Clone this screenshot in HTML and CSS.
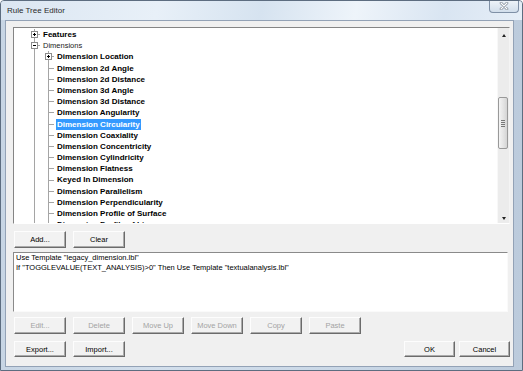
FILE: index.html
```html
<!DOCTYPE html>
<html lang="en">

<head>
    <meta charset="UTF-8">
    <title>Rule Tree Editor</title>
    <link rel="stylesheet" href="styles.css">
</head>

<body>
    <div class="window">
        <div class="titlebar">
            <span class="title">Rule Tree Editor</span>
            <span class="close">
                <svg width="10" height="8" viewBox="0 0 10 8">
                    <path d="M2 1 L8 7 M8 1 L2 7" stroke="#7f8a96" stroke-width="2.6" stroke-linecap="round" />
                    <path d="M2 1 L8 7 M8 1 L2 7" stroke="#ffffff" stroke-width="1.2" stroke-linecap="round" />
                </svg>
            </span>
        </div>

        <div class="client">
            <div class="tree">
                <div class="tree-body">
                    <div class="row"><span class="cell exp"><span class="box plus"></span></span><span class="label">Features</span></div>
                    <div class="row"><span class="cell exp"><span class="box minus"></span></span><span class="label plain">Dimensions</span></div>
                    <div class="row"><span class="cell pipe"></span><span class="cell exp"><span class="box plus"></span></span><span class="label">Dimension Location</span></div>
                    <div class="row"><span class="cell pipe"></span><span class="cell tee"></span><span class="label">Dimension 2d Angle</span></div>
                    <div class="row"><span class="cell pipe"></span><span class="cell tee"></span><span class="label">Dimension 2d Distance</span></div>
                    <div class="row"><span class="cell pipe"></span><span class="cell tee"></span><span class="label">Dimension 3d Angle</span></div>
                    <div class="row"><span class="cell pipe"></span><span class="cell tee"></span><span class="label">Dimension 3d Distance</span></div>
                    <div class="row"><span class="cell pipe"></span><span class="cell tee"></span><span class="label">Dimension Angularity</span></div>
                    <div class="row"><span class="cell pipe"></span><span class="cell tee"></span><span class="label selected">Dimension Circularity</span></div>
                    <div class="row"><span class="cell pipe"></span><span class="cell tee"></span><span class="label">Dimension Coaxiality</span></div>
                    <div class="row"><span class="cell pipe"></span><span class="cell tee"></span><span class="label">Dimension Concentricity</span></div>
                    <div class="row"><span class="cell pipe"></span><span class="cell tee"></span><span class="label">Dimension Cylindricity</span></div>
                    <div class="row"><span class="cell pipe"></span><span class="cell tee"></span><span class="label">Dimension Flatness</span></div>
                    <div class="row"><span class="cell pipe"></span><span class="cell tee"></span><span class="label">Keyed In Dimension</span></div>
                    <div class="row"><span class="cell pipe"></span><span class="cell tee"></span><span class="label">Dimension Parallelism</span></div>
                    <div class="row"><span class="cell pipe"></span><span class="cell tee"></span><span class="label">Dimension Perpendicularity</span></div>
                    <div class="row"><span class="cell pipe"></span><span class="cell tee"></span><span class="label">Dimension Profile of Surface</span></div>
                    <div class="row"><span class="cell pipe"></span><span class="cell tee"></span><span class="label">Dimension Profile of Line</span></div>
                </div>
                <div class="scrollbar">
                    <div class="sb-btn up"><span class="arrow-up"></span></div>
                    <div class="track">
                        <div class="thumb"><span class="grip"></span></div>
                    </div>
                    <div class="sb-btn down"><span class="arrow-down"></span></div>
                </div>
            </div>

            <div class="btn-row first">
                <button class="btn">Add...</button>
                <button class="btn">Clear</button>
            </div>

            <div class="rule-text">
                <div>Use Template "legacy_dimension.lbl"</div>
                <div>If "TOGGLEVALUE(TEXT_ANALYSIS)&gt;0" Then Use Template "textualanalysis.lbl"</div>
            </div>

            <div class="btn-row second">
                <button class="btn" disabled>Edit...</button>
                <button class="btn" disabled>Delete</button>
                <button class="btn" disabled>Move Up</button>
                <button class="btn" disabled>Move Down</button>
                <button class="btn" disabled>Copy</button>
                <button class="btn" disabled>Paste</button>
            </div>

            <div class="btn-row last">
                <div class="group">
                    <button class="btn">Export...</button>
                    <button class="btn">Import...</button>
                </div>
                <div class="group tight">
                    <button class="btn">OK</button>
                    <button class="btn">Cancel</button>
                </div>
            </div>
        </div>
    </div>
</body>

</html>
```

FILE: styles.css
```css
* {
    box-sizing: border-box;
}

body {
    margin: 0;
    font-family: "Liberation Sans", Arial, sans-serif;
    font-size: 7.5px;
    color: #000;
}

.window {
    width: 523px;
    height: 371px;
    border: 1px solid #5d6d80;
    border-radius: 4px 4px 0 0;
    background: linear-gradient(to right, #c7d5e4, #d3dfec 30%, #c9d7e6 70%, #bccbdc);
    display: flex;
    flex-direction: column;
    overflow: hidden;
}

.titlebar {
    height: 19px;
    flex: none;
    display: flex;
    justify-content: space-between;
    align-items: flex-start;
    padding-left: 6px;
    background: linear-gradient(100deg, #dbe6f2 0%, #e8f0f8 30%, #d6e3f0 50%, #eef4fa 68%, #d9e5f2 85%, #e6eef7 100%);
}

.title {
    font-size: 8px;
    line-height: 19px;
    color: #2a2a2a;
}

.close {
    width: 30px;
    height: 13px;
    margin: -1px 3px 0 0;
    border: 1px solid #7f90a6;
    border-top: 0;
    border-radius: 0 0 4px 4px;
    background: linear-gradient(#f0f5fa, #d2deeb);
    display: flex;
    align-items: center;
    justify-content: center;
}

.client {
    flex: 1;
    margin: 0 8px 3px 4px;
    border: 1px solid #93a2b6;
    background: #f0f0f0;
    padding: 6px 3px 0 7px;
    display: flex;
    flex-direction: column;
}

/* tree view */
.tree {
    height: 197px;
    flex: none;
    display: flex;
    border: 1px solid;
    border-color: #858585 #f4f4f4 #ffffff #858585;
}

.tree-body {
    flex: 1;
    background: #fff;
    overflow: hidden;
    padding: 1px 0 0 14px;
}

.row {
    display: flex;
    height: 11.2px;
    white-space: nowrap;
}

.cell {
    width: 14px;
    flex: none;
}

.pipe {
    background: linear-gradient(#a5a5a5, #a5a5a5) 6px 0 / 1px 100% no-repeat;
}

.tee,
.exp {
    background:
        linear-gradient(#a5a5a5, #a5a5a5) 6px 0 / 1px 100% no-repeat,
        linear-gradient(#a5a5a5, #a5a5a5) 7px 50% / 5px 1px no-repeat;
}

.exp {
    display: flex;
    align-items: center;
}

.box {
    width: 7px;
    height: 7px;
    margin-left: 3px;
    border: 1px solid #8c8c8c;
}

.box.plus {
    background:
        linear-gradient(#000, #000) center / 3px 1px no-repeat,
        linear-gradient(#000, #000) center / 1px 3px no-repeat,
        #fff;
}

.box.minus {
    background:
        linear-gradient(#000, #000) center / 3px 1px no-repeat,
        #fff;
}

.label {
    padding: 0 1px;
    line-height: 11.2px;
    font-size: 8px;
    font-weight: bold;
}

.label.plain {
    font-weight: normal;
    font-size: 7.5px;
    color: #222;
}

.label.selected {
    background: #3399ff;
    color: #fff;
}

/* scrollbar */
.scrollbar {
    width: 12px;
    flex: none;
    display: flex;
    flex-direction: column;
    background: #ececec;
    border-left: 1px solid #f8f8f8;
}

.sb-btn {
    display: flex;
    align-items: center;
    justify-content: center;
}

.sb-btn.up {
    height: 14px;
}

.sb-btn.down {
    height: 10px;
}

.arrow-up {
    border-left: 2.5px solid transparent;
    border-right: 2.5px solid transparent;
    border-bottom: 3px solid #222;
}

.arrow-down {
    border-left: 2.5px solid transparent;
    border-right: 2.5px solid transparent;
    border-top: 3px solid #222;
}

.track {
    flex: 1;
}

.thumb {
    width: 10px;
    height: 52px;
    margin-top: 55px;
    border: 1px solid #999;
    border-radius: 2px;
    background: linear-gradient(to right, #f4f4f4, #e2e2e2 60%, #d4d4d4);
    display: flex;
    align-items: center;
    justify-content: center;
}

.grip {
    width: 4px;
    height: 7px;
    background: repeating-linear-gradient(#777 0 1px, transparent 1px 2px);
}

/* buttons */
.btn-row {
    display: flex;
    gap: 7px;
    padding-left: 1px;
}

.btn-row.first {
    margin-top: 7px;
}

.btn-row.second {
    margin-top: 5px;
}

.btn-row.last {
    margin-top: 7px;
    justify-content: space-between;
}

.group {
    display: flex;
    gap: 7px;
}

.group.tight {
    gap: 4px;
}

.btn {
    width: 52px;
    height: 17px;
    padding: 0;
    font-family: inherit;
    font-size: 7.5px;
    color: #000;
    background: #f2f2f2;
    border: 1px solid;
    border-color: #fdfdfd #6b6b6b #6b6b6b #fdfdfd;
    box-shadow: inset -1px -1px #ababab;
}

.btn:disabled {
    color: #a3a3a3;
}

.last .btn {
    height: 16px;
}

.group.tight .btn {
    width: 51px;
}

/* rule text */
.rule-text {
    height: 60px;
    margin: 4px 2px 0 0;
    padding: 0 2px;
    background: #fff;
    border: 1px solid;
    border-color: #8a8a8a #fafafa #fafafa #8a8a8a;
    line-height: 9.6px;
    font-size: 7.5px;
    white-space: nowrap;
}
```
